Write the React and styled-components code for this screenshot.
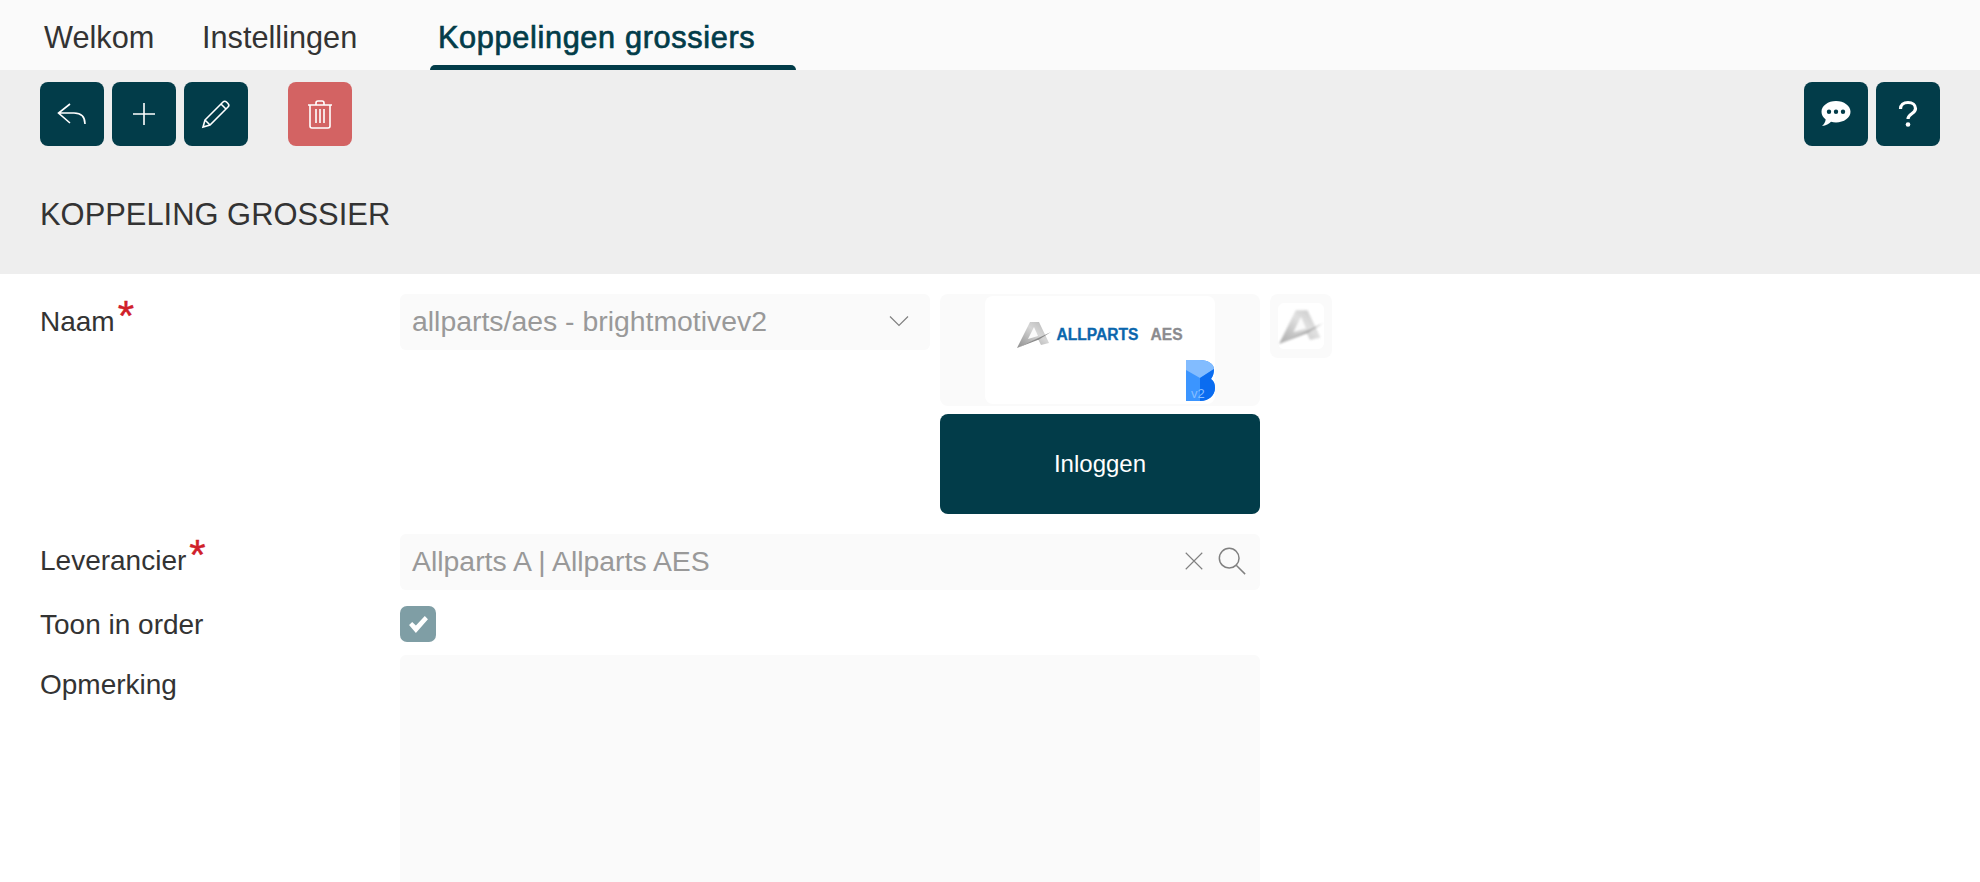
import React from 'react';
import styled, { createGlobalStyle } from 'styled-components';

const dark = '#023c49';

const GlobalStyle = createGlobalStyle`
html, body {
    margin: 0;
    padding: 0;
    background: #fff;
    overflow: hidden;
}
* {
    box-sizing: border-box;
}
`;

const Page = styled.div`
height: 882px;
overflow: hidden;
font-family: "Liberation Sans", Arial, sans-serif;
color: #333;
`;

const TabBar = styled.nav`
display: flex;
height: 70px;
background: #fafafa;
padding-left: 36px;
`;

const Tab = styled.div`
position: relative;
height: 70px;
width: ${p => p.$width}px;
padding: 19px 8px 0;
font-size: 30.7px;
line-height: 38px;
white-space: nowrap;
color: ${p => (p.$active ? dark : '#333')};
-webkit-text-stroke: ${p => (p.$active ? '0.7px' : '0')};
letter-spacing: ${p => (p.$active ? '0.65px' : '0')};
${p => p.$active && `
    &::after {
        content: '';
        position: absolute;
        left: 0;
        right: 0;
        bottom: 0;
        height: 5px;
        background: ${dark};
        border-radius: 5px 5px 0 0;
    }
`}
`;

const Panel = styled.section`
height: 204px;
background: #eee;
padding: 12px 40px 0;
`;

const Toolbar = styled.div`
display: flex;
justify-content: space-between;
`;

const ButtonGroup = styled.div`
display: flex;
gap: 8px;
`;

const IconButton = styled.button`
display: flex;
align-items: center;
justify-content: center;
width: 64px;
height: 64px;
padding: 0;
margin-left: ${p => (p.$danger ? '32px' : '0')};
border: none;
border-radius: 8px;
background: ${p => (p.$danger ? '#d36363' : dark)};
color: #fff;
`;

const Title = styled.h1`
margin: 50px 0 0;
font-size: 30.9px;
line-height: 38px;
font-weight: 400;
color: #333;
`;

const Form = styled.div`
padding: 20px 0 0 40px;
`;

const Row = styled.div`
display: flex;
align-items: flex-start;
margin-bottom: ${p => p.$gap || 0}px;
`;

const Label = styled.label`
flex: 0 0 360px;
font-size: 28px;
line-height: 36px;
padding-top: ${p => p.$top || 0}px;
color: #333;
`;

const Required = styled.span`
position: relative;
top: -2px;
color: #d0202a;
font-size: 42px;
line-height: 20px;
margin-left: 3px;
vertical-align: -1px;
-webkit-text-stroke: 0.4px #d0202a;
`;

const Field = styled.div`
display: flex;
align-items: center;
justify-content: space-between;
width: ${p => p.$width}px;
height: 56px;
padding: 0 ${p => p.$right || 12}px 2px 12px;
background: #fafafa;
border-radius: 6px;
font-size: 28.4px;
color: #999;
white-space: nowrap;
`;

const FieldIcons = styled.div`
display: flex;
align-items: center;
gap: 12px;
color: #808080;
`;

const LogoColumn = styled.div`
display: flex;
flex-direction: column;
gap: 8px;
width: 320px;
margin-left: 10px;
`;

const LogoFrame = styled.div`
display: flex;
justify-content: center;
align-items: center;
height: 112px;
background: #fafafa;
border-radius: 8px;
`;

const LogoCard = styled.div`
position: relative;
display: flex;
justify-content: center;
width: 230px;
height: 108px;
padding-top: 25px;
background: #fff;
border-radius: 8px;
`;

const Brand = styled.div`
display: flex;
align-items: flex-start;
font-size: 15.6px;
line-height: 18px;
font-weight: 700;
height: 30px;
-webkit-text-stroke: 0.3px;
`;

const BrandName = styled.span`
color: #0a66ad;
margin-left: 5px;
margin-top: 5px;
`;

const BrandSuffix = styled.span`
color: #8b8b8f;
margin-left: 12px;
margin-top: 5px;
`;

const CornerBadge = styled.svg`
position: absolute;
right: 0;
bottom: 3px;
`;

const BadgeLabel = styled.text`
font-size: 13px;
fill: #86bdff;
`;

const LoginButton = styled.button`
height: 100px;
border: none;
border-radius: 8px;
background: ${dark};
color: #fff;
font-family: inherit;
font-size: 24px;
`;

const Thumb = styled.div`
display: flex;
align-items: center;
justify-content: center;
width: 62px;
height: 64px;
margin-left: 10px;
background: #fafafa;
border-radius: 8px;
`;

const ThumbInner = styled.div`
display: flex;
align-items: center;
justify-content: center;
width: 46px;
height: 46px;
background: #fff;
border-radius: 6px;
`;

const ThumbMark = styled.div`
display: flex;
filter: blur(1.1px);
opacity: 0.75;
`;

const CheckBox = styled.div`
display: flex;
align-items: center;
justify-content: center;
width: 36px;
height: 36px;
background: #7f9ea5;
border-radius: 7px;
color: #fff;
`;

const TextArea = styled.textarea`
display: block;
width: 860px;
height: 300px;
border: none;
outline: none;
resize: none;
background: #fafafa;
border-radius: 6px;
`;

const Stroke = ({ size = 32, children, width = 1.6 }) => (
    <svg width={size} height={size} viewBox="0 0 32 32" fill="none" stroke="currentColor" strokeWidth={width}>
        {children}
    </svg>
);

const AllpartsMark = ({ width = 34, height = 27 }) => (
    <svg width={width} height={height} viewBox="0 0 34 27">
        <defs>
            <linearGradient id="markFill" x1="0" y1="1" x2="1" y2="0">
                <stop offset="0" stopColor="#8e8e8e" />
                <stop offset="0.6" stopColor="#d6d6d6" />
                <stop offset="1" stopColor="#b4b4b4" />
            </linearGradient>
        </defs>
        <path d="M0 27L13 1h9l10 21-8 2-3-6-12 5z" fill="url(#markFill)" />
        <path d="M17 6l-6 12 10-3z" fill="#fafafa" />
        <path d="M0 27L34 11 22 18.500z" fill="#8a8a8a" />
    </svg>
);

const App = () => {
    return (
        <Page>
            <GlobalStyle />
            <TabBar>
                <Tab $width={158}>Welkom</Tab>
                <Tab $width={236}>Instellingen</Tab>
                <Tab $active $width={366}>Koppelingen grossiers</Tab>
            </TabBar>
            <Panel>
                <Toolbar>
                    <ButtonGroup>
                        <IconButton>
                            <Stroke>
                                <path d="M14 6L2.500 15 14 25M2.500 15H18c7 0 11 4 11 11" />
                            </Stroke>
                        </IconButton>
                        <IconButton>
                            <Stroke>
                                <path d="M16 5v22M5 16h22" />
                            </Stroke>
                        </IconButton>
                        <IconButton>
                            <Stroke>
                                <path d="M5 22L23 4c1-1 2.500-1 3.500 0l1.500 1.500c1 1 1 2.500 0 3.500L10 27l-7 2zM5 22l5 5M21 6l5.500 5.500" />
                            </Stroke>
                        </IconButton>
                        <IconButton $danger>
                            <Stroke>
                                <path d="M4 7h24M12 7V5c0-1 1-2 2-2h4c1 0 2 1 2 2v2M6 7v21c0 1.200 1 2 2 2h16c1 0 2-.8 2-2V7M12 11v14M16 11v14M20 11v14" />
                            </Stroke>
                        </IconButton>
                    </ButtonGroup>
                    <ButtonGroup>
                        <IconButton>
                            <svg width="30" height="26" viewBox="0 0 30 26" fill="currentColor">
                                <path fillRule="evenodd" d="M15 0c8 0 14.500 4.800 14.500 10.800S23 21.500 15 21.500c-1.800 0-3.500-.2-5-.7C8 22.800 5 24.800 1 25c1.800-1.500 3.300-3.800 3.700-6.500C2 16.500.5 13.800.5 10.800.5 4.800 7 0 15 0zM8 8.600a2.200 2.200 0 100 4.400 2.200 2.200 0 000-4.400zm7 0a2.200 2.200 0 100 4.400 2.200 2.200 0 000-4.400zm7 0a2.200 2.200 0 100 4.400 2.200 2.200 0 000-4.400z" />
                            </svg>
                        </IconButton>
                        <IconButton>
                            <Stroke width={3.2}>
                                <path d="M8.500 11c0-4 3-6.500 7.500-6.500s7.500 2.500 7.500 6c0 5.500-7.500 5-7.500 10.500" />
                                <circle cx="16" cy="26.500" r="2.300" fill="currentColor" stroke="none" />
                            </Stroke>
                        </IconButton>
                    </ButtonGroup>
                </Toolbar>
                <Title>KOPPELING GROSSIER</Title>
            </Panel>
            <Form>
                <Row $gap={20}>
                    <Label $top={10}>Naam<Required>*</Required></Label>
                    <Field $width={530} $right={19}>
                        allparts/aes - brightmotivev2
                        <FieldIcons>
                            <Stroke size={24}>
                                <path d="M4 10l12 12 12-12" />
                            </Stroke>
                        </FieldIcons>
                    </Field>
                    <LogoColumn>
                        <LogoFrame>
                            <LogoCard>
                                <Brand>
                                    <AllpartsMark />
                                    <BrandName>ALLPARTS</BrandName>
                                    <BrandSuffix>AES</BrandSuffix>
                                </Brand>
                                <CornerBadge width="29" height="41" viewBox="0 0 29 41">
                                    <path d="M0 0h14c8 0 14 4 14 9 0 4-1 7-3 10 3 2 4 5 4 9 0 7-6 13-15 13H0z" fill="#3b95ff" />
                                    <path d="M0 0h14c8 0 14 4 14 9l-14 9-14-8z" fill="#82bcff" />
                                    <path d="M14 18l14-9c0 4-1 7-3 10 3 2 4 5 4 9 0 7-6 13-15 13z" fill="#0a6cf0" />
                                    <BadgeLabel x="5" y="38">v2</BadgeLabel>
                                </CornerBadge>
                            </LogoCard>
                        </LogoFrame>
                        <LoginButton>Inloggen</LoginButton>
                    </LogoColumn>
                    <Thumb>
                        <ThumbInner>
                            <ThumbMark>
                                <AllpartsMark width={44} height={35} />
                            </ThumbMark>
                        </ThumbInner>
                    </Thumb>
                </Row>
                <Row $gap={16}>
                    <Label $top={9}>Leverancier<Required>*</Required></Label>
                    <Field $width={860} $right={13}>
                        Allparts A | Allparts AES
                        <FieldIcons>
                            <Stroke size={22}>
                                <path d="M4 4l24 24M28 4L4 28" />
                            </Stroke>
                            <Stroke size={30}>
                                <circle cx="13" cy="13" r="10.500" />
                                <path d="M20.500 20.500L30 30" />
                            </Stroke>
                        </FieldIcons>
                    </Field>
                </Row>
                <Row $gap={12}>
                    <Label $top={1}>Toon in order</Label>
                    <CheckBox>
                        <svg width="21" height="19" viewBox="0 0 20 18" fill="currentColor">
                            <path d="M1 9.500L4 6.500l3.500 3.500L16 1l3 3L7.500 17z" />
                        </svg>
                    </CheckBox>
                </Row>
                <Row>
                    <Label $top={12}>Opmerking</Label>
                    <TextArea readOnly />
                </Row>
            </Form>
        </Page>
    );
};

export default App;
